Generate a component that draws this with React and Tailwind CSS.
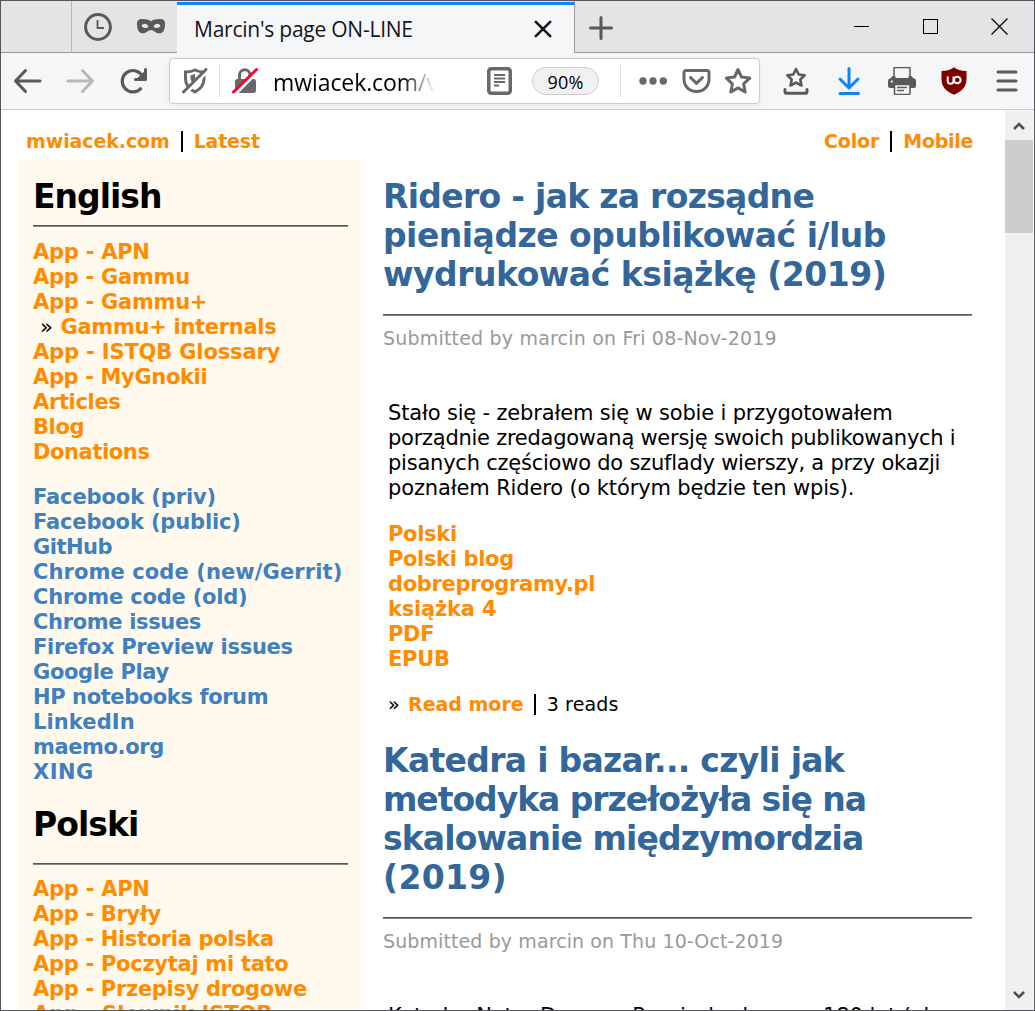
const ORANGE = [
  ["App - APN", "tracking-[-0.25px]"],
  ["App - Gammu", "tracking-[-0.27px]"],
  ["App - Gammu+", "tracking-[-0.27px]"],
  ["Gammu+ internals", "tracking-[-0.3px]", true],
  ["App - ISTQB Glossary", "tracking-[-0.15px]"],
  ["App - MyGnokii", "tracking-[-0.35px]"],
  ["Articles", "tracking-[-0.35px]"],
  ["Blog", "tracking-[-0.4px]"],
  ["Donations", "tracking-[-0.4px]"],
];
const BLUE = [
  ["Facebook (priv)", "tracking-[-0.1px]"],
  ["Facebook (public)", "tracking-[-0.14px]"],
  ["GitHub", "tracking-[-0.5px]"],
  ["Chrome code (new/Gerrit)", "tracking-[0.1px]"],
  ["Chrome code (old)", "tracking-[-0.2px]"],
  ["Chrome issues", "tracking-[-0.35px]"],
  ["Firefox Preview issues", "tracking-[-0.3px]"],
  ["Google Play", "tracking-[-0.35px]"],
  ["HP notebooks forum", "tracking-[-0.4px]"],
  ["LinkedIn", "tracking-[0.1px]"],
  ["maemo.org", "tracking-[-0.4px]"],
  ["XING", "tracking-[0.5px]"],
];
const POLISH = [
  ["App - APN", "tracking-[-0.25px]"],
  ["App - Bryły", "tracking-[-0.3px]"],
  ["App - Historia polska", "tracking-[-0.33px]"],
  ["App - Poczytaj mi tato", "tracking-[-0.28px]"],
  ["App - Przepisy drogowe", "tracking-[-0.3px]"],
  ["App - Słownik ISTQB", "tracking-[-0.1px]"],
];
const POST1 = [
  ["Ridero - jak za rozsądne", "tracking-[-0.7px]"],
  ["pieniądze opublikować i/lub", "tracking-[-0.5px]"],
  ["wydrukować książkę (2019)", "tracking-[-0.47px]"],
];
const POST2 = [
  ["Katedra i bazar... czyli jak", "tracking-[-0.69px]"],
  ["metodyka przełożyła się na", "tracking-[-1.03px]"],
  ["skalowanie międzymordzia", "tracking-[-0.88px]"],
  ["(2019)", "tracking-[0.3px]"],
];
const BODY1 = [
  ["Stało się - zebrałem się w sobie i przygotowałem", "tracking-[-0.17px]"],
  ["porządnie zredagowaną wersję swoich publikowanych i", "tracking-[-0.26px]"],
  ["pisanych częściowo do szuflady wierszy, a przy okazji", "tracking-[-0.23px]"],
  ["poznałem Ridero (o którym będzie ten wpis).", "tracking-[-0.14px]"],
];
const FILES = [
  ["Polski", "tracking-[-0.3px]"],
  ["Polski blog", "tracking-[-0.35px]"],
  ["dobreprogramy.pl", "tracking-[-0.32px]"],
  ["książka 4", "tracking-[-0.2px]"],
  ["PDF", "tracking-[-0.3px]"],
  ["EPUB", "tracking-[-0.3px]"],
];

function Links({ items, className }) {
  return (
    <ul className={"text-[21px] leading-[25px] font-bold whitespace-nowrap " + className}>
      {items.map(([t, k, sub]) => (
        <li key={t} className={k}>
          {sub && <span className="mr-2 ml-[7px] font-normal text-black">»</span>}
          {t}
        </li>
      ))}
    </ul>
  );
}

function Rule() {
  return <div className="h-0.5 border-t border-b border-t-[#555555] border-b-[#888888]" />;
}

function Title({ lines }) {
  return (
    <h2 className="text-[33px] leading-[39px] font-bold whitespace-nowrap text-[#336699]">
      {lines.map(([t, k]) => (
        <span key={t} className={"block " + k}>{t}</span>
      ))}
    </h2>
  );
}

function Meta({ children, className }) {
  return <p className={"mt-2.5 h-[25px] text-[19px] leading-[25px] whitespace-nowrap text-[#999999] " + className}>{children}</p>;
}

const STAR = "M14 2.5l3.5 7.6 8.2 1-6.1 5.7 1.6 8.2-7.2-4.1-7.2 4.1 1.6-8.2-6.1-5.7 8.2-1z";

function TabStrip() {
  return (
    <div className="flex h-[52px] shrink-0 bg-[#e3e4e6]">
      <div className="w-[71px] border-r border-b border-r-[#b5b5b7] border-b-[#99999b]" />
      <div className="flex w-[105px] items-center border-b border-[#99999b]">
        <svg className="ml-3 size-7" viewBox="0 0 28 28" fill="none" stroke="#58595b">
          <circle cx="14" cy="14" r="12.4" strokeWidth="3" />
          <path d="M13.5 7v8h6.500" strokeWidth="1.800" />
        </svg>
        <svg className="ml-[25px] h-[15px] w-7" viewBox="0 0 28 15">
          <path fill="#58595b" fillRule="evenodd" d="M14 2.2C16 1 19 .1 22.500 .1 27 .1 28 1.800 28 5c0 6-2 9.300-6 9.300-3.500 0-5-3.300-8-3.300s-4.500 3.300-8 3.300C2 14.300 0 11 0 5 0 1.800 1 .1 5.500 .1 9 .1 12 1 14 2.200zM4.500 7c2 2.800 5.500 2.500 7 .5C10 4 6 4 4.500 7zm12 .5c1.500 2 5 2.300 7-.5C22 4 18 4 16.500 7.500z" />
        </svg>
      </div>
      <div className="flex w-[398px] items-center border-r border-[#99999b] bg-[#f5f6f7] shadow-[inset_0_1px_0_#e3e4e6,inset_0_4px_0_#0a84ff]">
        <span className="ml-[17px] w-[340px] pt-[3px] font-['Open_Sans',sans-serif] text-[21px] leading-6 tracking-[-0.24px] whitespace-nowrap text-[#15141a]">Marcin's page ON-LINE</span>
        <svg className="mt-[3px] size-[18px]" viewBox="0 0 18 18" stroke="#15141a" strokeWidth="2.600" strokeLinecap="round"><path d="M1.800 1.800l14.400 14.400M16.200 1.800L1.800 16.200" /></svg>
      </div>
      <div className="flex grow items-center border-b border-[#99999b]">
        <svg className="ml-3.5 mt-0.5 size-6" viewBox="0 0 24 24" stroke="#58595b" strokeWidth="3" strokeLinecap="round"><path d="M12 1.500v21M1.500 12h21" /></svg>
        <svg className="ml-[241px] h-4 w-[15px]" viewBox="0 0 15 16"><path d="M0 7.500h15" stroke="#000" /></svg>
        <div className="ml-[54px] size-[15px] border border-black" />
        <svg className="ml-[53px] size-[17px]" viewBox="0 0 17 17" stroke="#111" strokeWidth="1.400"><path d="M.5 .5l16 16M16.500 .5l-16 16" /></svg>
      </div>
    </div>
  );
}

function Toolbar() {
  return (
    <div className="flex h-[57px] shrink-0 items-center border-b border-[#cccccc] bg-[#f5f6f7]">
      <svg className="ml-3 h-[26px] w-[29px]" viewBox="0 0 29 26" fill="none" stroke="#58595b" strokeWidth="3" strokeLinecap="round" strokeLinejoin="round"><path d="M27 13H2.500M12.500 2.500L2.500 13l10 10.500" /></svg>
      <svg className="ml-6 h-[26px] w-[29px]" viewBox="0 0 29 26" fill="none" stroke="#b7b8ba" strokeWidth="3" strokeLinecap="round" strokeLinejoin="round"><path d="M2 13h24.500M16.500 2.500l10 10.500-10 10.500" /></svg>
      <svg className="ml-[25px] h-[26px] w-[27px]" viewBox="0 0 27 26" fill="none" stroke="#58595b" strokeLinecap="round" strokeLinejoin="round">
        <path d="M20.500 20.800A10.700 10.700 0 1 1 22 7.500" strokeWidth="3.200" />
        <path d="M25.500 1.500v10H15.500" strokeWidth="3" /><path d="M25.500 3v8.500H17z" fill="#58595b" strokeWidth="1" />
      </svg>

      <div className="ml-[22px] flex h-[46px] w-[591px] items-center rounded-[4px] border border-[#cccccc] bg-white shadow-[0_1px_5px_rgba(0,0,0,0.06)]">
        <svg className="ml-3 h-[26px] w-[26px]" viewBox="0 0 26 26" fill="none" strokeLinecap="round">
          <path d="M3.500 4Q9 4 13 2q4 2 9 2v7c0 6-3.500 10-9 13C7 21 3.500 17 3.500 11z" stroke="#68686a" strokeWidth="3" />
          <path d="M8.500 7.500L13 6v11c-3-2-4.500-4-4.500-7.500z" fill="#68686a" />
          <path d="M3.500 25.500L25.500 3.500" stroke="#fff" strokeWidth="3" />
          <path d="M1.500 24L24 1.500" stroke="#68686a" strokeWidth="3" />
        </svg>
        <div className="ml-[11px] h-8 w-px bg-[#dddddd]" />
        <svg className="ml-3 h-[26px] w-[26px]" viewBox="0 0 26 26" fill="none" strokeLinecap="round">
          <path d="M7.500 12V7a5 5 0 0 1 10.500 0v5" stroke="#68686a" strokeWidth="3" />
          <rect x="3" y="11" width="21" height="14" rx="2.500" fill="#68686a" />
          <path d="M3.500 26L26 3.500" stroke="#fff" strokeWidth="3" />
          <path d="M1.500 24L24.500 1.500" stroke="#ff0039" strokeWidth="3" />
        </svg>
        <span className="ml-[15px] w-[165px] bg-gradient-to-r from-black from-[78%] to-transparent to-[98%] bg-clip-text pt-0.5 font-['Open_Sans',sans-serif] text-[23px] leading-8 tracking-[-0.08px] whitespace-nowrap text-transparent">mwiacek.com/v</span>
        <svg className="ml-[49px] h-7 w-[25px]" viewBox="0 0 25 28" fill="none" stroke="#68686a">
          <rect x="1.750" y="1.750" width="21.500" height="24.500" rx="2.500" strokeWidth="3.500" />
          <path d="M7 8h11M7 11.500h11M7 15h11M7 18.500h5" strokeWidth="1.800" />
        </svg>
        <div className="ml-5 flex h-7 w-[67px] items-center justify-center rounded-full border border-[#cccccc] bg-[#f1f1f2] pt-0.5 font-['Open_Sans',sans-serif] text-[18px] tracking-[0.2px]">90%</div>
        <div className="ml-[21px] h-8 w-px bg-[#dddddd]" />
        <svg className="ml-[18px] h-2 w-7" viewBox="0 0 28 8" fill="#68686a"><circle cx="4" cy="4" r="3.700" /><circle cx="14" cy="4" r="3.700" /><circle cx="24.300" cy="4" r="3.700" /></svg>
        <svg className="ml-[15px] h-[26px] w-[29px]" viewBox="0 0 29 26" fill="none" stroke="#68686a" strokeWidth="3" strokeLinecap="round" strokeLinejoin="round">
          <path d="M4 2.500h21a2 2 0 0 1 2 2V11c0 7-5 12.500-12.500 12.500S2 18 2 11V4.500a2 2 0 0 1 2-2z" /><path d="M8.500 9.500l6 5.800 6-5.800" />
        </svg>
        <svg className="ml-[13px] size-7" viewBox="0 0 28 28" fill="none" stroke="#68686a" strokeWidth="3" strokeLinejoin="round"><path d={STAR} /></svg>
      </div>

      <svg className="ml-[23px] h-7 w-[26px]" viewBox="0 0 26 28" fill="none" stroke="#58595b" strokeLinejoin="round" strokeLinecap="round">
        <path d="M13 2l2.700 5.500 6 .8-4.400 4.200 1.200 6L13 15.600l-5.500 2.900 1.200-6L4.300 8.300l6-.8z" strokeWidth="2.600" />
        <path d="M2 22.500v2.300q0 1.500 1.500 1.500h19q1.500 0 1.500-1.500v-2.300" strokeWidth="3" />
      </svg>
      <svg className="ml-7 h-7 w-6" viewBox="0 0 24 28" fill="none" stroke="#0a84ff" strokeWidth="3" strokeLinecap="round" strokeLinejoin="round"><path d="M12 1.500v19M3 12l9 9 9-9M3 26.500h18.500" /></svg>
      <svg className="ml-[27px] h-7 w-7" viewBox="0 0 28 28">
        <path d="M6 9V1.500q0-1 1-1h14q1 0 1 1V9" fill="none" stroke="#58595b" strokeWidth="1.500" />
        <path d="M3 11Q3.500 9.500 5 9h2l1 2h12l1-2h2q1.500 .5 2 2 3 .5 3 3v5q0 2-2 2H2q-2 0-2-2v-5q0-2.500 3-3z" fill="#58595b" />
        <circle cx="3.800" cy="14.500" r="1.200" fill="#ddd" />
        <path d="M6.500 17.500h15.500v9q0 1-1 1H7.500q-1 0-1-1z" fill="#f5f6f7" stroke="#58595b" strokeWidth="1.500" />
        <path d="M9 20.500h10M9 23.500h7" stroke="#58595b" strokeWidth="1.400" />
      </svg>
      <svg className="ml-[25px] h-[28px] w-[26px]" viewBox="0 0 26 28" fill="none">
        <path d="M13 .3Q17 4 25.500 4v8c0 8-5 12.500-12.500 15.700C5.500 24.500 .5 20 .5 12V4Q9 4 13 .3z" fill="#800000" />
        <path d="M6.700 9.500v4.300a2.900 2.900 0 0 0 5.800 0V9.500" stroke="#fff" strokeWidth="2" />
        <circle cx="16.300" cy="13" r="3.300" stroke="#fff" strokeWidth="2" />
      </svg>
      <svg className="ml-[29px] h-[22px] w-[22px]" viewBox="0 0 22 22" stroke="#58595b" strokeWidth="3" strokeLinecap="round"><path d="M2 2h18M2 11h18M2 20h18" /></svg>
    </div>
  );
}

function Sep() {
  return <span className="h-[21px] w-0.5 bg-black" />;
}

export default function App() {
  return (
    <div className="flex h-[1011px] w-[1035px] flex-col overflow-hidden border border-[#55555a] bg-white font-['DejaVu_Sans',sans-serif] text-black">
      <TabStrip />
      <Toolbar />
      <div className="flex min-h-0 grow overflow-hidden">
        <div className="flex min-w-0 grow flex-col overflow-hidden">
          <nav className="flex h-[50px] shrink-0 items-center justify-between pt-3 pr-8 pl-[25px] text-[19px] leading-[25px] font-bold text-[#ff8c00]">
            <div className="flex items-center gap-[11px]"><span className="tracking-[-0.1px]">mwiacek.com</span><Sep /><span className="tracking-[-0.2px]">Latest</span></div>
            <div className="flex items-center gap-[11px]"><span className="tracking-[-0.1px]">Color</span><Sep /><span className="tracking-[-0.3px]">Mobile</span></div>
          </nav>
          <div className="flex min-h-0 grow">
            <aside className="ml-4 w-[347px] shrink-0 bg-[#fff9ee] px-4 pt-[17px]">
              <h2 className="text-[33px] leading-[39px] font-bold tracking-[-1px]">English</h2>
              <div className="mt-[9px]"><Rule /></div>
              <Links items={ORANGE} className="mt-[13px] text-[#ff8c00]" />
              <Links items={BLUE} className="mt-5 text-[#4080bf]" />
              <h2 className="mt-5 text-[33px] leading-[39px] font-bold tracking-[-0.95px]">Polski</h2>
              <div className="mt-[19px]"><Rule /></div>
              <Links items={POLISH} className="mt-3 text-[#ff8c00]" />
            </aside>
            <main className="ml-[19px] w-[589px] pt-[17px]">
              <article>
                <Title lines={POST1} />
                <div className="mt-5"><Rule /></div>
                <Meta className="tracking-[0.19px]">Submitted by marcin on Fri 08-Nov-2019</Meta>
                <div className="mt-[50px] pl-[5px] text-[21px] leading-[25px] whitespace-nowrap">
                  {BODY1.map(([t, k]) => <p key={t} className={k}>{t}</p>)}
                </div>
                <Links items={FILES} className="mt-[21px] pl-[5px] text-[#ff8c00]" />
                <p className="mt-5 flex items-center pl-[5px] text-[19px] leading-[25px]">
                  <span className="w-5">»</span>
                  <span className="mr-2.5 font-bold text-[#ff8c00]">Read more</span>
                  <Sep />
                  <span className="ml-[11px] tracking-[0.15px]">3 reads</span>
                </p>
              </article>
              <article className="mt-6">
                <Title lines={POST2} />
                <div className="mt-5"><Rule /></div>
                <Meta className="tracking-[0.1px]">Submitted by marcin on Thu 10-Oct-2019</Meta>
                <p className="mt-[50px] pl-[5px] text-[21px] leading-[25px] tracking-[-0.1px] whitespace-nowrap">Katedra Notre Dame w Paryżu budowano 180 lat (ok</p>
              </article>
            </main>
          </div>
        </div>
        <div className="mr-px flex w-7 shrink-0 flex-col items-center bg-[#f0f0f0]">
          <svg className="h-[30px] w-3" viewBox="0 0 12 30" fill="none" stroke="#505050" strokeWidth="2.600"><path d="M1 19l5-5 5 5" /></svg>
          <div className="h-[93px] w-full bg-[#cdcdcd]" />
          <svg className="mt-auto h-[30px] w-3" viewBox="0 0 12 30" fill="none" stroke="#505050" strokeWidth="2.600"><path d="M1 12l5 5 5-5" /></svg>
        </div>
      </div>
    </div>
  );
}
